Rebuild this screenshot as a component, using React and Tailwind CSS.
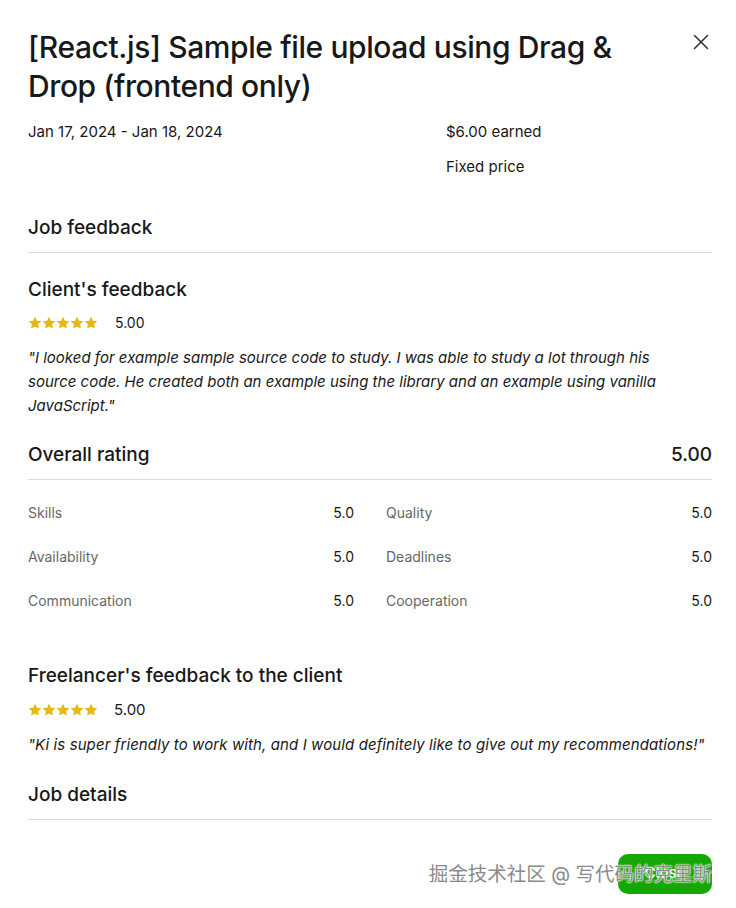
import { X } from "lucide-react";

const font = { fontFamily: 'Inter, "Liberation Sans", Arial, "Noto Sans CJK SC", sans-serif' };

function Stars({ size = 14 }) {
  return (
    <div className="flex items-center">
      {[0, 1, 2, 3, 4].map((i) => (
        <svg key={i} width={size} height={size} viewBox="0 0 24 24">
          <path
            d="M12 1.2l3.3 6.8 7.5.9-5.5 5.2 1.4 7.5L12 18l-6.7 3.6 1.4-7.5-5.5-5.2 7.5-.9z"
            fill="#e3b912"
          />
        </svg>
      ))}
    </div>
  );
}

function Metric({ label, value }) {
  return (
    <div className="flex items-center justify-between h-[44px]">
      <span className="text-[14px] text-[#676767]">{label}</span>
      <span className="text-[14px] text-[#181818]">{value}</span>
    </div>
  );
}

export default function App() {
  return (
    <div className="relative w-[736px] h-[908px] bg-white text-[#181818] overflow-hidden" style={font}>
      <div className="pl-[28px] pr-[24px] pt-[28px]">
        <div className="flex justify-between items-start">
          <h1 className="text-[30px] leading-[39px] font-medium tracking-[-0.4px] w-[640px]">
            [React.js] Sample file upload using Drag &amp; Drop (frontend only)
          </h1>
          <button className="mt-[1px] -mr-[2px] text-[#333]">
            <X size={26} strokeWidth={1.4} />
          </button>
        </div>

        <div className="flex mt-[14px] text-[15px]">
          <div className="w-[418px] leading-[24px]">Jan 17, 2024 - Jan 18, 2024</div>
          <div className="flex flex-col gap-[11px] leading-[24px]">
            <span>$6.00 earned</span>
            <span>Fixed price</span>
          </div>
        </div>

        <div className="mt-[36px] border-b border-[#d9d9d9] pb-[11px]">
          <h2 className="text-[19px] leading-[26px] font-medium">Job feedback</h2>
        </div>

        <h3 className="mt-[24px] text-[19px] leading-[26px] font-medium">Client's feedback</h3>
        <div className="flex items-center gap-[17px] mt-[9px]">
          <Stars />
          <span className="text-[14px]">5.00</span>
        </div>
        <p className="mt-[13px] text-[15px] leading-[24px] italic pr-[40px]">
          "I looked for example sample source code to study. I was able to study a lot through his source code. He created both an example using the library and an example using vanilla JavaScript."
        </p>

        <div className="mt-[24px] flex justify-between items-center border-b border-[#d9d9d9] pb-[11px]">
          <h2 className="text-[19px] leading-[26px] font-medium">Overall rating</h2>
          <span className="text-[19px] leading-[26px] font-medium">5.00</span>
        </div>

        <div className="grid grid-cols-2 gap-x-[32px] mt-[10px]">
          <Metric label="Skills" value="5.0" />
          <Metric label="Quality" value="5.0" />
          <Metric label="Availability" value="5.0" />
          <Metric label="Deadlines" value="5.0" />
          <Metric label="Communication" value="5.0" />
          <Metric label="Cooperation" value="5.0" />
        </div>

        <h3 className="mt-[41px] text-[19px] leading-[26px] font-medium">Freelancer's feedback to the client</h3>
        <div className="flex items-center gap-[16px] mt-[10px]">
          <Stars />
          <span className="text-[15px]">5.00</span>
        </div>
        <p className="mt-[11px] text-[15px] leading-[24px] italic tracking-[0.1px] whitespace-nowrap">
          "Ki is super friendly to work with, and I would definitely like to give out my recommendations!"
        </p>

        <div className="mt-[25px] border-b border-[#d9d9d9] pb-[11px]">
          <h2 className="text-[19px] leading-[26px] font-medium">Job details</h2>
        </div>

        <div className="flex justify-end mt-[34px]">
          <button className="w-[94px] h-[40px] rounded-[10px] bg-[#14a800] text-white text-[15px] font-medium">
            Close
          </button>
        </div>
      </div>

      <div
        className="absolute right-[24px] top-[860px] text-[19.5px] leading-[28px] text-[#8a8a8a] whitespace-nowrap"
        style={{ textShadow: "0 0 2px #fff, 0 0 2px #fff, 0 0 1px #fff" }}
      >
        掘金技术社区 @ 写代码的克里斯
      </div>
    </div>
  );
}
